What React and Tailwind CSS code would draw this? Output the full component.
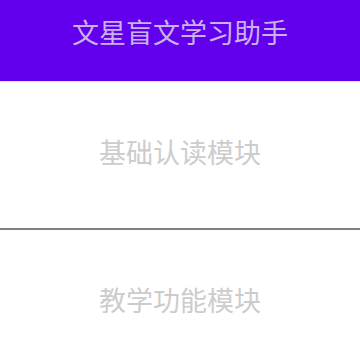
import React from 'react';

const sections = ['基础认读模块', '教学功能模块'];

export default function App() {
  return (
    <div
      className="w-[360px] h-[360px] overflow-hidden bg-white"
      style={{ fontFamily: '"Noto Sans CJK SC", "Noto Sans", sans-serif' }}
    >
      {/* Title bar */}
      <div className="h-[82px] bg-[#6200ee] flex items-start justify-center pt-[12px] border-b border-[#e6d8fb]">
        <span className="text-[27px] leading-[40px] text-[#c7b3e8]">文星盲文学习助手</span>
      </div>

      {sections.map((label, i) => (
        <div key={label}>
          <div className="h-[146px] flex items-center justify-center pb-[6px]">
            <span className="text-[27px] leading-[40px] text-[#cccccc]">{label}</span>
          </div>
          {i === 0 && <div className="h-[2px] bg-[#808080]"></div>}
        </div>
      ))}
    </div>
  );
}
